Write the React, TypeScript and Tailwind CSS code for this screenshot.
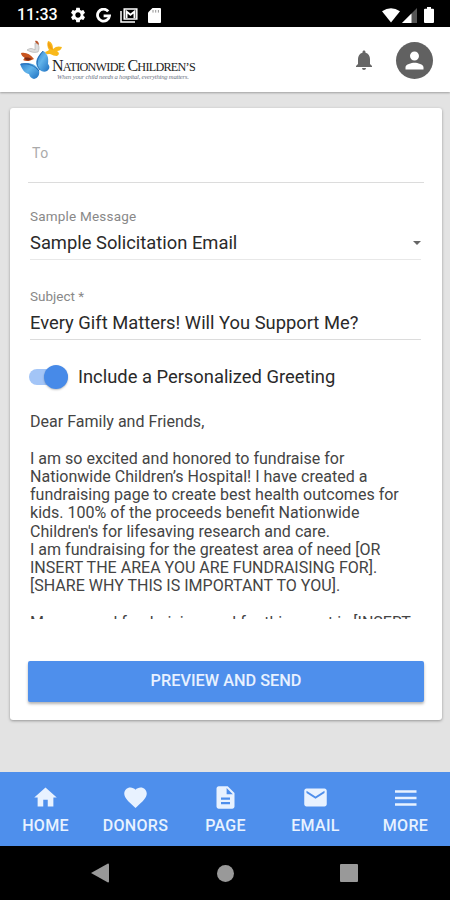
import React from 'react';
import {
  MdSettings,
  MdNotifications,
  MdPerson,
  MdHome,
  MdFavorite,
  MdDescription,
  MdEmail,
} from 'react-icons/md';

const MenuLines = ({ className }: { className?: string }) => (
  <svg className={className} viewBox="0 0 27 27" fill="none" stroke="currentColor" strokeWidth="2.4">
    <path d="M3 7.5h21.5M3 14h21.5M3 20.5h21.5" />
  </svg>
);

const tabs = [
  { label: 'HOME', icon: MdHome },
  { label: 'DONORS', icon: MdFavorite },
  { label: 'PAGE', icon: MdDescription },
  { label: 'EMAIL', icon: MdEmail },
  { label: 'MORE', icon: MenuLines },
];

const message = `Dear Family and Friends,

I am so excited and honored to fundraise for
Nationwide Children’s Hospital! I have created a
fundraising page to create best health outcomes for
kids. 100% of the proceeds benefit Nationwide
Children's for lifesaving research and care.
I am fundraising for the greatest area of need [OR
INSERT THE AREA YOU ARE FUNDRAISING FOR].
[SHARE WHY THIS IS IMPORTANT TO YOU].

My personal fundraising goal for this event is [INSERT`;

const StatusBar = () => (
  <div className="flex h-[27px] shrink-0 items-center bg-black pt-[3px] pr-4 pl-[17px] text-white">
    <span className="w-[52px] text-[16px] leading-5 font-medium">11:33</span>
    <MdSettings className="h-[18px] w-[18px]" />
    <svg className="ml-[9px] h-[15px] w-[15px]" viewBox="0 0 15 15" fill="none" stroke="currentColor" strokeWidth="2.8">
      <path d="M12.2 3.4A6 6 0 1 0 13.5 7.8H7.6" />
    </svg>
    <svg className="ml-[9px] h-[15px] w-[18px]" viewBox="0 0 18 15" fill="none" stroke="currentColor">
      <path d="M1 3v11h14" strokeWidth="1.5" />
      <path d="M4.2 1h12.6v10H4.2z" strokeWidth="1.5" />
      <path d="M6.5 10V3.5l4 3.3 4-3.3V10" strokeWidth="2" />
    </svg>
    <svg className="ml-[10px] h-[15px] w-[13px]" viewBox="0 0 13 15">
      <path d="M4.5 0H12a1 1 0 0 1 1 1v13a1 1 0 0 1-1 1H1a1 1 0 0 1-1-1V4.5z" fill="currentColor" />
      <path d="M5 2v2.6M7.7 2v2.6M10.4 2v2.6" stroke="#777" strokeWidth="0.8" />
    </svg>
    <svg className="ml-auto h-[15px] w-[18px]" viewBox="0 0 18 15" fill="currentColor">
      <path d="M0 3.2Q9-2.8 18 3.2L9 14.5z" />
    </svg>
    <svg className="ml-[2px] h-[15px] w-[15px]" viewBox="0 0 15 15">
      <path d="M15 0v15H0z" fill="#555" />
      <path d="M9.5 5.5V15H0z" fill="#fff" />
    </svg>
    <svg className="ml-[7px] h-4 w-[10px]" viewBox="0 0 10 16" fill="currentColor">
      <path d="M3 0h4v1.8h2a1 1 0 0 1 1 1V15a1 1 0 0 1-1 1H1a1 1 0 0 1-1-1V2.8a1 1 0 0 1 1-1h2z" />
    </svg>
  </div>
);

const Butterflies = () => (
  <svg className="h-[42px] w-[44px] shrink-0" viewBox="0 0 44 42">
    <defs>
      <linearGradient id="blueWing" x1="0" y1="0" x2="1" y2="1">
        <stop offset="0" stopColor="#2a7bcb" />
        <stop offset="0.45" stopColor="#62b4ea" />
        <stop offset="1" stopColor="#1d6fc0" />
      </linearGradient>
    </defs>
    <path d="M8 11c3-2 5-2 8 0l0-7c4 0 5 5 3 9-4 1-8 0-11-2z" fill="#dedede" stroke="#aaa" strokeWidth="0.6" />
    <path d="M16 2c2-1 4 1 4 4l-3-2z" fill="#b9562d" />
    <path d="M2 14c5-1 9 1 13 6-4 2-8 3-11 1l2-2c-2-1-4-3-4-5z" fill="#c9551f" />
    <path d="M5 19c3-1 6 0 8 1-3 2-6 2-8-1z" fill="#7c2b16" />
    <path d="M29 2c4 1 5 4 5 8 3-3 6-3 9-2-1 3-3 4-5 4 3 2 2 4 0 5-3 0-4-1-7-2-2 0-4 1-5-2 2-1 3-1 4-2-2-3-2-6-1-9z" fill="#f9b91b" />
    <path d="M29 3c3 2 4 6 5 8-3-1-6-3-5-8z" fill="#f2a015" />
    <path d="M21 31c-6-5-5-12 3-19 4 2 6 6 5 13 2 2 2 5-1 7-2 1-5 1-7-1z" fill="url(#blueWing)" />
    <path d="M1 25c8-2 15-1 19 6 1 5-1 8-5 9-3-1-4-2-5-5-5-1-7-5-9-10z" fill="url(#blueWing)" />
    <path d="M24 12c-6 7-8 13-3 19M2 25c8-1 14 2 18 7" fill="none" stroke="#1b5fa8" strokeWidth="0.8" />
  </svg>
);

const Header = () => (
  <header className="flex h-[65px] shrink-0 items-center bg-white pt-px pr-[17px] pl-[19px] shadow-[0_1px_2px_rgba(0,0,0,0.3)]">
    <Butterflies />
    <div className="-ml-[11px] flex flex-col pt-[18px] text-[#1c1c1c]">
      <span className="flex h-[15px] items-baseline font-['Liberation_Serif',serif] text-[16px] leading-[15px] tracking-[-0.75px] whitespace-nowrap">
        N<span className="mr-[3px] text-[12.2px]">ATIONWIDE</span>C<span className="text-[12.2px]">HILDREN’S</span>
      </span>
      <span className="pl-[5px] font-['Liberation_Serif',serif] text-[6.6px] leading-[8px] tracking-[-0.2px] whitespace-nowrap text-gray-500 italic">
        When your child needs a hospital, everything matters.
      </span>
    </div>
    <MdNotifications className="ml-auto h-6 w-6 text-[#666]" />
    <div className="ml-5 flex h-[37px] w-[37px] items-center justify-center rounded-full bg-[#616161] text-white">
      <MdPerson className="h-[27px] w-[27px]" />
    </div>
  </header>
);

const EmailForm = () => (
  <div className="mx-auto mt-4 flex h-[612px] w-[432px] flex-col rounded-[3px] bg-white px-[18px] shadow-[0_1px_3px_rgba(0,0,0,0.35)]">
    <div className="h-[75px] border-b border-[#dcdcdc] pt-[35px] pl-1 text-[14px] leading-5 tracking-[0.5px] text-[#aaa]">To</div>
    <div className="mr-[3px] ml-[2px] flex h-[77px] flex-col border-b border-[#e8e8e8] pt-[23px]">
      <label className="text-[13.5px] leading-5 tracking-[0.2px] text-[#888]">Sample Message</label>
      <div className="flex items-center justify-between pt-[5px] text-[18.35px] leading-6 text-[#2a2a2a]">
        <span>Sample Solicitation Email</span>
        <svg className="h-1 w-2 text-[#666]" viewBox="0 0 8 4" fill="currentColor">
          <path d="M0 0h8L4 4z" />
        </svg>
      </div>
    </div>
    <div className="mr-[3px] ml-[2px] flex h-20 flex-col border-b border-[#dcdcdc] pt-[26px]">
      <label className="text-[13.5px] leading-5 text-[#888]">Subject *</label>
      <span className="pt-[5px] text-[18.35px] leading-6 text-[#2a2a2a]">Every Gift Matters! Will You Support Me?</span>
    </div>
    <div className="flex items-center pt-[25px] pl-px">
      <div className="flex h-4 w-[39px] items-center justify-end rounded-full bg-[#a3c5f7]">
        <div className="h-6 w-6 shrink-0 rounded-full bg-[#478ae8] shadow-[0_1px_2px_rgba(0,0,0,0.25)]" />
      </div>
      <span className="pl-[10px] text-[18.35px] leading-6 text-[#2a2a2a]">Include a Personalized Greeting</span>
    </div>
    <div className="mt-6 ml-[2px] h-[206px] overflow-hidden text-[16.05px] leading-[18.25px] whitespace-pre text-[#444]">
      {message}
    </div>
    <button className="mt-auto mb-[18px] h-[41px] shrink-0 rounded-[2px] bg-[#4e8fec] text-[16.3px] font-medium text-[#e8f1ff] shadow-[0_2px_3px_rgba(0,0,0,0.3)]">
      PREVIEW AND SEND
    </button>
  </div>
);

const TabBar = () => (
  <nav className="grid h-[74px] shrink-0 grid-cols-5 bg-[#4e8fec] text-[#e8f2ff]">
    {tabs.map(({ label, icon: Icon }) => (
      <a key={label} className="flex flex-col items-center pt-3 pl-px">
        <Icon className="h-[27px] w-[27px]" />
        <span className="pt-[5px] text-[16px] leading-5 font-medium tracking-[0.3px]">{label}</span>
      </a>
    ))}
  </nav>
);

const SystemNav = () => (
  <div className="flex h-[54px] shrink-0 items-center bg-black pl-[91px] text-[#999]">
    <svg className="h-5 w-[18px]" viewBox="0 0 18 20" fill="currentColor">
      <path d="M0 10L17 .5Q18 .5 18 1.5v17q0 1-1 1z" />
    </svg>
    <div className="ml-[108px] h-[17px] w-[17px] rounded-full bg-[#999]" />
    <div className="ml-[106px] h-[18px] w-[18px] rounded-[1px] bg-[#999]" />
  </div>
);

const App = () => {
  return (
    <div className="flex h-[900px] w-[450px] flex-col overflow-hidden bg-[#e3e3e3] font-['Roboto',sans-serif]">
      <StatusBar />
      <Header />
      <main className="flex-1 pl-[2px]">
        <EmailForm />
      </main>
      <TabBar />
      <SystemNav />
    </div>
  );
};

export default App;
